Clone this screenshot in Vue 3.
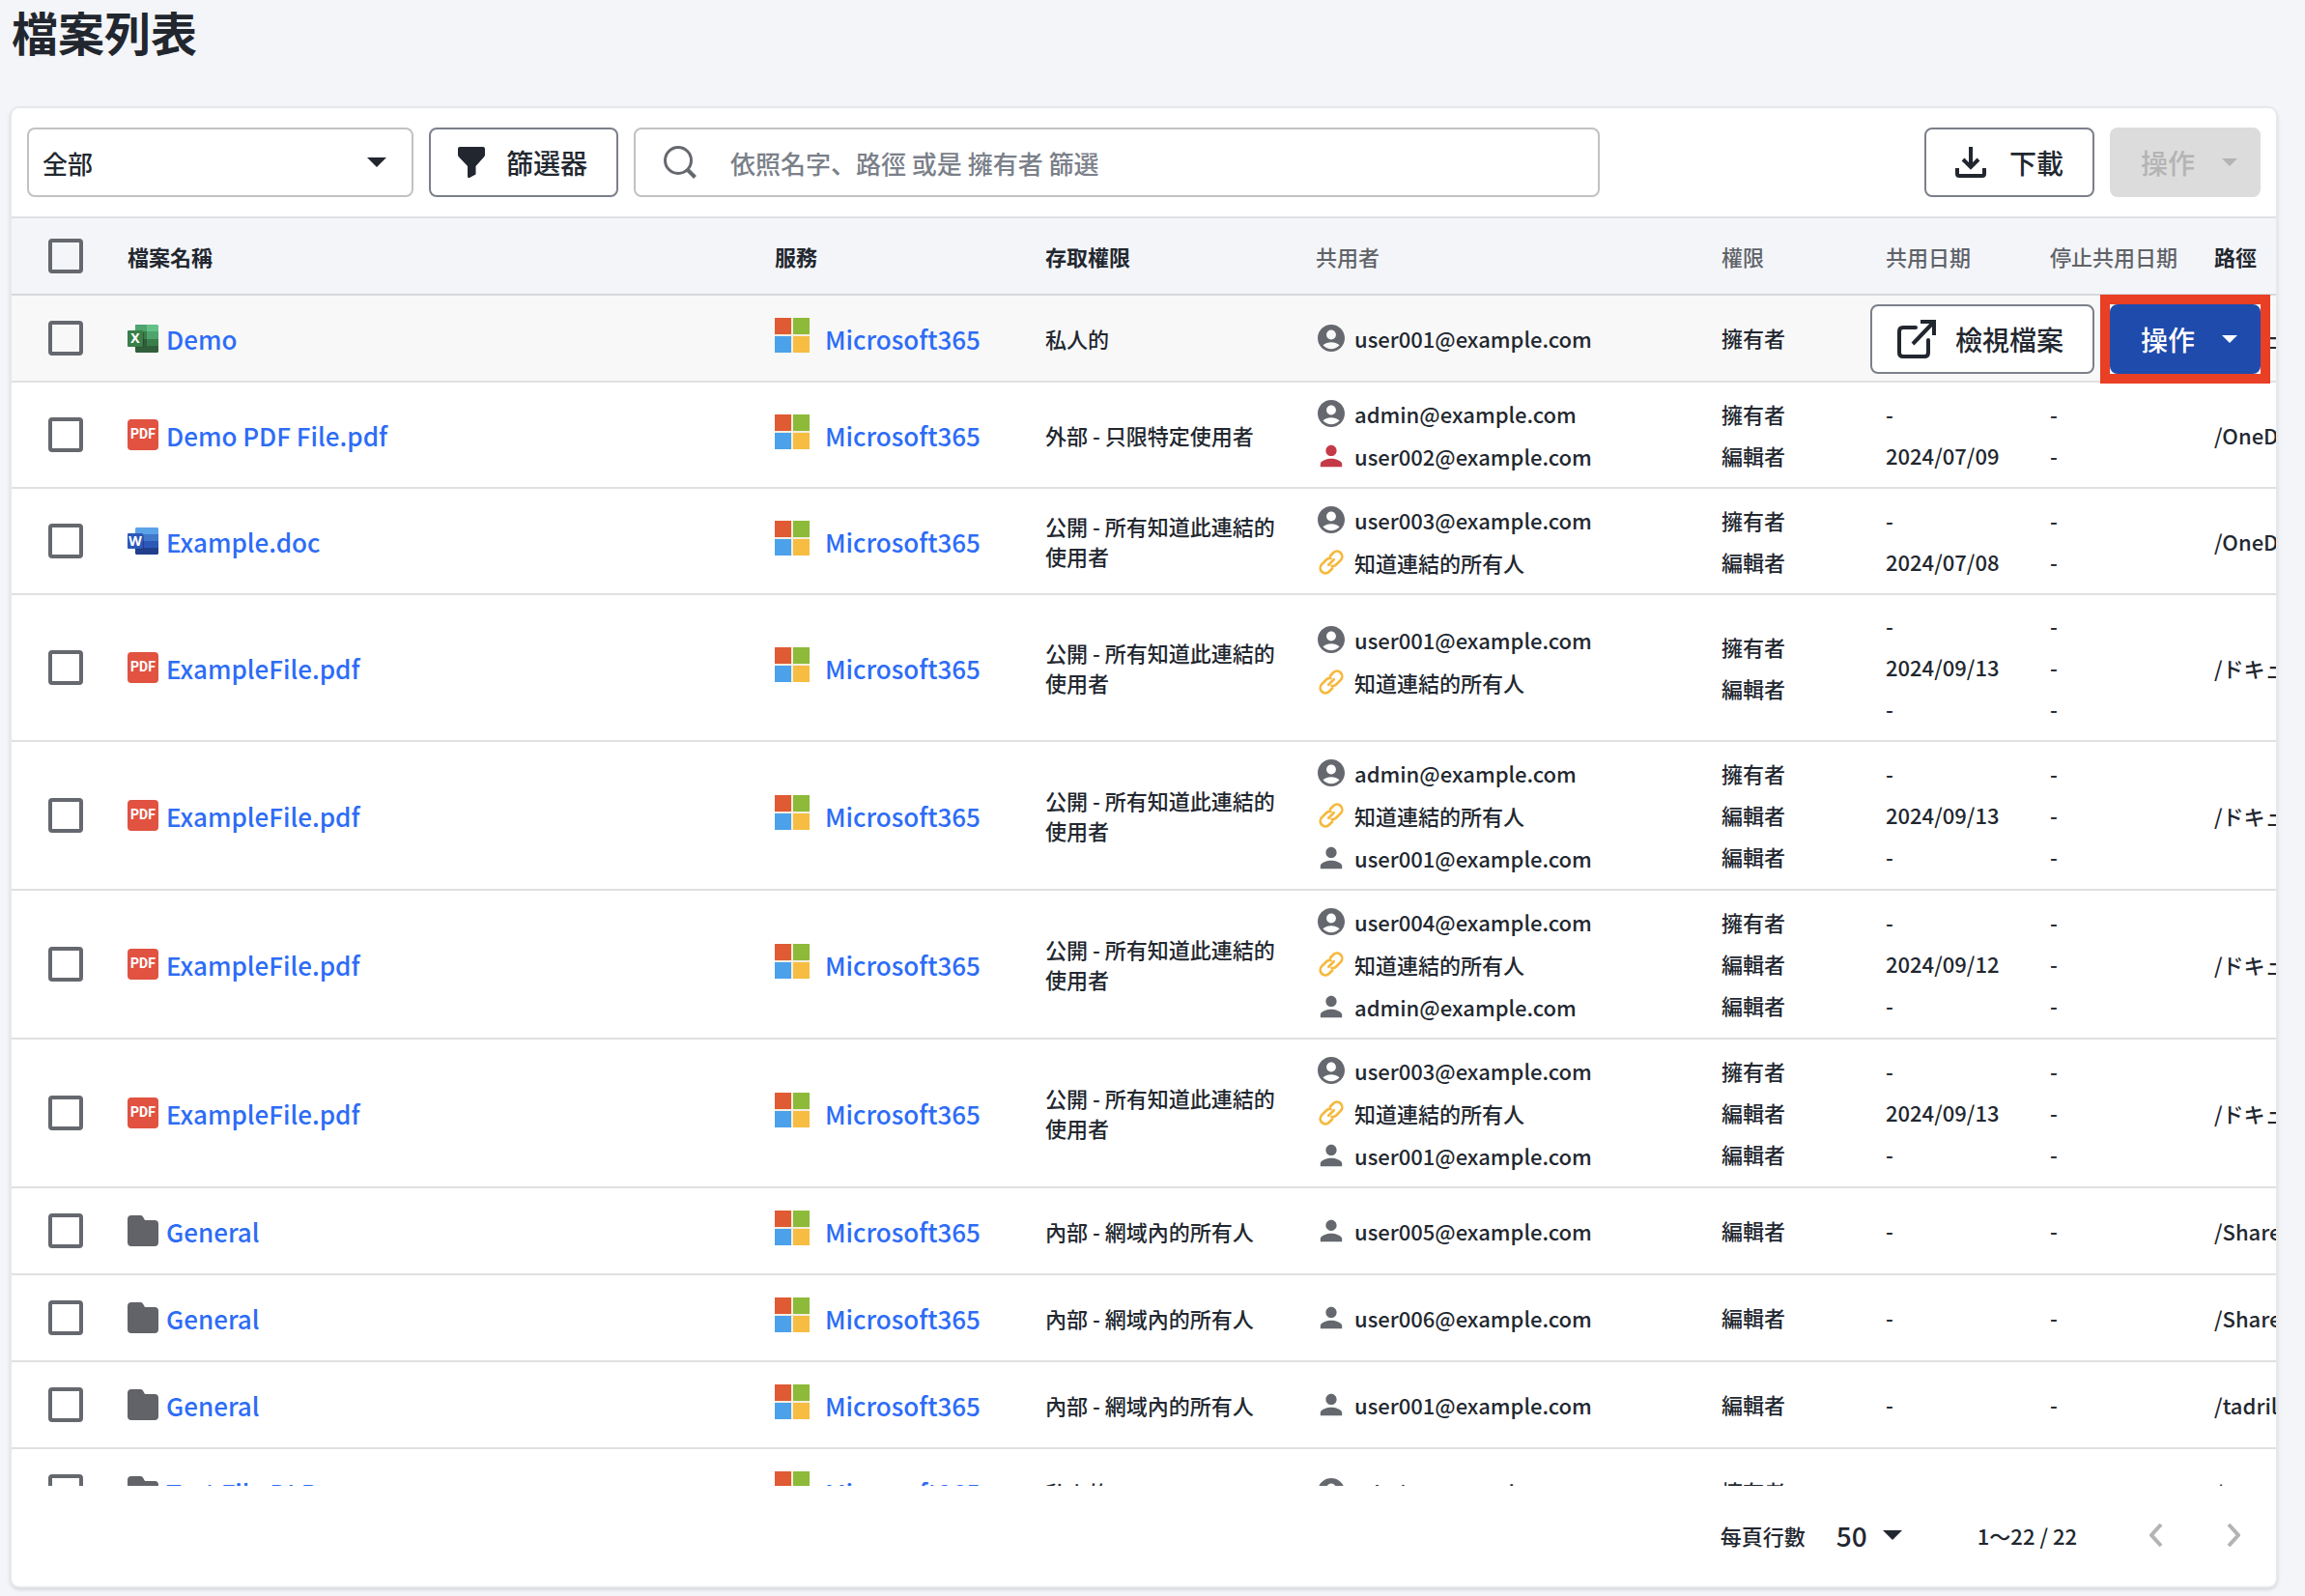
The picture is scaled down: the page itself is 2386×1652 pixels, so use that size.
<script setup>
import { ref } from 'vue'

const PUBLIC = '公開 - 所有知道此連結的使用者'
const INTERNAL = '內部 - 網域內的所有人'
const DOCS = '/ドキュメント'
const anyone = { kind: 'link', name: '知道連結的所有人' }
const owner = (name) => ({ kind: 'owner', name: name + '@example.com' })
const member = (name) => ({ kind: 'member', name: name + '@example.com' })
const external = (name) => ({ kind: 'external', name: name + '@example.com' })

const rows = ref([
  { icon: 'excel', name: 'Demo', access: '私人的', users: [owner('user001')], roles: ['擁有者'], shared: ['-'], stopped: ['-'], path: DOCS, active: true },
  { icon: 'pdf', name: 'Demo PDF File.pdf', access: '外部 - 只限特定使用者', users: [owner('admin'), external('user002')], roles: ['擁有者', '編輯者'], shared: ['-', '2024/07/09'], stopped: ['-', '-'], path: '/OneDrive' },
  { icon: 'word', name: 'Example.doc', access: PUBLIC, users: [owner('user003'), anyone], roles: ['擁有者', '編輯者'], shared: ['-', '2024/07/08'], stopped: ['-', '-'], path: '/OneDrive' },
  { icon: 'pdf', name: 'ExampleFile.pdf', access: PUBLIC, users: [owner('user001'), anyone], roles: ['擁有者', '編輯者'], shared: ['-', '2024/09/13', '-'], stopped: ['-', '-', '-'], path: DOCS },
  { icon: 'pdf', name: 'ExampleFile.pdf', access: PUBLIC, users: [owner('admin'), anyone, member('user001')], roles: ['擁有者', '編輯者', '編輯者'], shared: ['-', '2024/09/13', '-'], stopped: ['-', '-', '-'], path: DOCS },
  { icon: 'pdf', name: 'ExampleFile.pdf', access: PUBLIC, users: [owner('user004'), anyone, member('admin')], roles: ['擁有者', '編輯者', '編輯者'], shared: ['-', '2024/09/12', '-'], stopped: ['-', '-', '-'], path: DOCS },
  { icon: 'pdf', name: 'ExampleFile.pdf', access: PUBLIC, users: [owner('user003'), anyone, member('user001')], roles: ['擁有者', '編輯者', '編輯者'], shared: ['-', '2024/09/13', '-'], stopped: ['-', '-', '-'], path: DOCS },
  { icon: 'folder', name: 'General', access: INTERNAL, users: [member('user005')], roles: ['編輯者'], shared: ['-'], stopped: ['-'], path: '/Shared' },
  { icon: 'folder', name: 'General', access: INTERNAL, users: [member('user006')], roles: ['編輯者'], shared: ['-'], stopped: ['-'], path: '/Shared' },
  { icon: 'folder', name: 'General', access: INTERNAL, users: [member('user001')], roles: ['編輯者'], shared: ['-'], stopped: ['-'], path: '/tadrill' },
  { icon: 'folder', name: 'Test File DLP', access: '私人的', users: [owner('admin')], roles: ['擁有者'], shared: ['-'], stopped: ['-'], path: '/OneDrive' },
])
</script>

<template>
  <main class="page">
    <h1 class="title">檔案列表</h1>
    <section class="card">
      <div class="toolbar">
        <div class="picker scope">
          <select aria-label="範圍"><option>全部</option></select>
          <svg class="caret" viewBox="0 0 20 10"><path d="M0 0h20L10 10z" /></svg>
        </div>
        <button class="btn filter" type="button">
          <svg class="funnel" viewBox="0 0 28 32"><path d="M2 0h24q2 0 2 2v6q0 1.500-1 2.500L18.500 20v8.500L12 32q-2 .5-2-1.500V20L1 10.500Q0 9.500 0 8V2q0-2 2-2z" /></svg>
          篩選器
        </button>
        <div class="search">
          <svg viewBox="0 0 36 36" fill="none" stroke="currentColor" stroke-width="3"><circle cx="16" cy="16" r="13.500" /><path d="m26 26 7.500 7.500" stroke-width="4" /></svg>
          <input type="text" aria-label="搜尋" placeholder="依照名字、路徑 或是 擁有者 篩選" />
        </div>
        <div class="spacer"></div>
        <button class="btn" type="button">
          <svg class="download" viewBox="0 0 32 32" fill="none" stroke="currentColor" stroke-width="4"><path d="M16 0v21M8 13l8 8 8-8M2 22v6q0 2 2 2h24q2 0 2-2v-6" /></svg>
          下載
        </button>
        <button class="btn menu" type="button" disabled>
          操作
          <svg class="menu-caret" viewBox="0 0 16 8"><path d="M0 0h16L8 8z" /></svg>
        </button>
      </div>

      <div class="list">
        <table>
          <colgroup>
            <col class="w-check" /><col /><col class="w-service" /><col class="w-service" /><col class="w-users" />
            <col class="w-date" /><col class="w-date" /><col class="w-date" /><col class="w-path" />
          </colgroup>
          <thead>
            <tr>
              <th class="check"><input type="checkbox" aria-label="全選" /></th>
              <th>檔案名稱</th>
              <th>服務</th>
              <th>存取權限</th>
              <th class="plain">共用者</th>
              <th class="plain">權限</th>
              <th class="plain">共用日期</th>
              <th class="plain">停止共用日期</th>
              <th>路徑</th>
            </tr>
          </thead>
          <tbody>
            <tr v-for="(row, i) in rows" :key="i" :class="{ active: row.active }">
              <td class="check"><input type="checkbox" :aria-label="row.name" /></td>
              <td>
                <a class="file" href="#">
                  <svg v-if="row.icon === 'pdf'" class="file-icon" viewBox="0 0 32 32">
                    <rect width="32" height="32" rx="4" fill="#e15241" />
                    <text x="16" y="20" text-anchor="middle" class="pdf-text">PDF</text>
                  </svg>
                  <svg v-else-if="row.icon === 'excel'" class="file-icon" viewBox="0 0 32 32">
                    <path d="M8 2h12v7H8z" fill="#4fa36d" /><path d="M20 2h11l1 1v6H20z" fill="#63c188" />
                    <path d="M8 9h12v8H8z" fill="#3a7e49" /><path d="M20 9h12v8H20z" fill="#4fa36d" />
                    <path d="M8 17h12v7H8z" fill="#2f5f3a" /><path d="M20 17h12v7H20z" fill="#3a7e49" />
                    <path d="M8 24h24v6l-1 1H9l-1-1z" fill="#2f5f3a" />
                    <path d="M8 10h9v14l-1 1.500H8z" fill="#000" opacity=".25" />
                    <rect y="8" width="16" height="17" rx="1" fill="#3a7e49" />
                    <text x="8" y="21" text-anchor="middle" class="letter">X</text>
                  </svg>
                  <svg v-else-if="row.icon === 'word'" class="file-icon" viewBox="0 0 32 32">
                    <path d="M9 2h22l1 1v6H8V3z" fill="#5ba3e8" />
                    <path d="M8 9h24v7H8z" fill="#4078cc" />
                    <path d="M8 16h24v7H8z" fill="#2c58b8" />
                    <path d="M8 23h24v6l-1 1H9l-1-1z" fill="#213f8c" />
                    <path d="M8 10h9v13l-1 1.500H8z" fill="#000" opacity=".25" />
                    <rect y="8" width="16" height="16" rx="1" fill="#2c58b8" />
                    <text x="8" y="21" text-anchor="middle" class="letter">W</text>
                  </svg>
                  <svg v-else class="file-icon" viewBox="0 0 32 32" fill="#626368"><path d="M4 0h10q1 0 2 1.500L18 5h10q4 0 4 4v19q0 4-4 4H4q-4 0-4-4V4q0-4 4-4z" /></svg>
                  <span>{{ row.name }}</span>
                </a>
              </td>
              <td>
                <a class="service" href="#">
                  <svg class="ms" viewBox="0 0 36 36">
                    <path fill="#f4eee0" d="M0 0h36v36H0z" />
                    <path fill="#e05a33" d="M0 0h17v17H0z" /><path fill="#8dba38" d="M19 0h17v17H19z" />
                    <path fill="#4ba2ea" d="M0 19h17v17H0z" /><path fill="#f6bd42" d="M19 19h17v17H19z" />
                  </svg>
                  <span>Microsoft365</span>
                </a>
              </td>
              <td class="access">{{ row.access }}</td>
              <td>
                <div v-for="(user, j) in row.users" :key="j" class="user" :class="user.kind">
                  <svg v-if="user.kind === 'owner'" viewBox="2 2 20 20"><path d="M12 2C6.480 2 2 6.480 2 12s4.480 10 10 10 10-4.480 10-10S17.520 2 12 2zm0 4c1.930 0 3.500 1.570 3.500 3.500S13.930 13 12 13s-3.500-1.570-3.500-3.500S10.070 6 12 6zm0 14c-2.030 0-4.430-.820-6.140-2.880C7.550 15.800 9.680 15 12 15s4.450.800 6.140 2.120C16.430 19.180 14.030 20 12 20z" /></svg>
                  <svg v-else-if="user.kind === 'link'" viewBox="0 0 24 24" fill="none" stroke="currentColor" stroke-width="2.500" stroke-linecap="round"><path d="m11 6 3-3a4.600 4.600 0 0 1 7 7l-4.500 4.500a4.600 4.600 0 0 1-4 1.200M13 18l-3 3a4.600 4.600 0 0 1-7-7l4.500-4.500a4.600 4.600 0 0 1 4-1.200M9.500 14.500l5-5" /></svg>
                  <svg v-else viewBox="2 2 20 20"><path d="M12 12c2.210 0 4-1.790 4-4s-1.790-4-4-4-4 1.790-4 4 1.790 4 4 4zm0 2c-2.670 0-8 1.340-8 4v2h16v-2c0-2.660-5.330-4-8-4z" /></svg>
                  <span>{{ user.name }}</span>
                </div>
                <div v-if="row.shared.length > row.users.length" class="user-gap"></div>
              </td>
              <td class="stack"><div v-for="(role, j) in row.roles" :key="j">{{ role }}</div></td>
              <td class="stack"><div v-for="(date, j) in row.shared" :key="j">{{ date }}</div></td>
              <td class="stack"><div v-for="(date, j) in row.stopped" :key="j">{{ date }}</div></td>
              <td class="path">
                {{ row.path }}
                <div v-if="row.active" class="row-actions">
                  <button class="btn view" type="button">
                    <svg class="open" viewBox="0 0 40 40" fill="none" stroke="currentColor" stroke-width="4"><path d="M19 8H6Q2 8 2 12v22q0 4 4 4h22q4 0 4-4V21" stroke-linecap="round" /><path d="M24 2h14v14M38 2 16 25" /></svg>
                    檢視檔案
                  </button>
                  <span class="highlight">
                    <button class="btn menu primary" type="button">
                      操作
                      <svg class="menu-caret" viewBox="0 0 16 8"><path d="M0 0h16L8 8z" /></svg>
                    </button>
                  </span>
                </div>
              </td>
            </tr>
          </tbody>
        </table>
      </div>

      <footer class="pager">
        <label for="page-size">每頁行數</label>
        <div class="picker size">
          <select id="page-size"><option>50</option></select>
          <svg class="caret" viewBox="0 0 20 10"><path d="M0 0h20L10 10z" /></svg>
        </div>
        <span class="range">1～22 / 22</span>
        <button class="nav" type="button" aria-label="上一頁" disabled>
          <svg viewBox="0 0 14 24"><path d="M12 1 2 12l10 11" /></svg>
        </button>
        <button class="nav" type="button" aria-label="下一頁" disabled>
          <svg viewBox="0 0 14 24"><path d="m2 1 10 11L2 23" /></svg>
        </button>
      </footer>
    </section>
  </main>
</template>

<style>
body {
  margin: 0;
  background: #f4f5f8;
}
</style>

<style scoped>
.page {
  box-sizing: border-box;
  height: 100vh;
  padding: 0 30px 10px 12px;
  display: flex;
  flex-direction: column;
  color: #22272f;
  font-family: "Noto Sans CJK JP", "Noto Sans CJK TC", sans-serif;
  font-size: 22px;
  font-weight: 500;
}
.title {
  margin: 0 0 48px;
  font-size: 48px;
  line-height: 64px;
  font-weight: 700;
}
.card {
  flex: 1;
  min-height: 0;
  display: flex;
  flex-direction: column;
  background: #fff;
  border-radius: 8px;
  box-shadow: 0 0 0 2px #e6e8ea, 0 2px 4px 1px #c8cbd0;
}
.toolbar {
  display: flex;
  gap: 16px;
  padding: 20px 16px;
  border-bottom: 2px solid #dfe1e4;
}
select,
input,
button {
  font: inherit;
  color: inherit;
}
.picker {
  position: relative;
  display: flex;
  align-items: center;
}
.picker select {
  appearance: none;
  width: 100%;
  margin: 0;
  background: transparent;
  border: 0;
  outline: 0;
}
.caret {
  position: absolute;
  width: 20px;
  height: 10px;
  fill: currentColor;
  pointer-events: none;
}
.scope {
  width: 400px;
}
.picker.scope select {
  height: 72px;
  padding: 0 14px;
  border: 2px solid #c2c2c2;
  border-radius: 8px;
  font-size: 26px;
}
.scope .caret {
  right: 28px;
}
.btn {
  box-sizing: border-box;
  height: 72px;
  padding: 0 30px;
  display: flex;
  align-items: center;
  gap: 24px;
  background: #fff;
  border: 2px solid #7b808a;
  border-radius: 8px;
  font-size: 28px;
  white-space: nowrap;
}
.btn svg {
  fill: currentColor;
}
.filter {
  gap: 22px;
  padding-left: 28px;
}
.view {
  gap: 20px;
  padding-left: 26px;
}
.btn .funnel {
  width: 28px;
  height: 32px;
}
.btn .download {
  width: 32px;
  height: 32px;
  fill: none;
}
.btn .open {
  width: 40px;
  height: 40px;
  fill: none;
}
.menu {
  gap: 28px;
  padding: 0 22px 0 30px;
}
.menu-caret {
  width: 16px;
  height: 8px;
}
.btn:disabled {
  color: #b4b4b4;
  background: #dcdcdc;
  border-color: #dcdcdc;
}
.primary {
  color: #fff;
  background: #1f4bad;
  border-color: #1f4bad;
}
.search {
  box-sizing: border-box;
  flex: 0 1 1000px;
  height: 72px;
  padding: 0 28px;
  display: flex;
  align-items: center;
  gap: 34px;
  border: 2px solid #c2c2c2;
  border-radius: 8px;
}
.search svg {
  width: 36px;
  height: 36px;
  color: #65686e;
}
.search input {
  flex: 1;
  min-width: 0;
  padding: 0;
  border: 0;
  outline: 0;
  background: transparent;
  font-size: 26px;
}
.search input::placeholder {
  color: #7b808a;
  opacity: 1;
}
.spacer {
  flex: 1;
}
.list {
  flex: 1;
  min-height: 0;
  overflow: hidden;
}
table {
  width: 100%;
  table-layout: fixed;
  border-spacing: 0;
}
.w-check { width: 120px; }
.w-service { width: 280px; }
.w-users { width: 420px; }
.w-date { width: 170px; }
.w-path { width: 64px; }
th {
  height: 80px;
  box-sizing: border-box;
  padding: 0;
  text-align: left;
  white-space: nowrap;
  font-weight: 700;
  background: #f4f5f8;
  border-bottom: 2px solid #d5d8dc;
}
.plain {
  font-weight: 500;
  color: #5f6369;
}
td {
  height: 90px;
  box-sizing: border-box;
  padding: 10px 0;
  vertical-align: middle;
  border-bottom: 2px solid #e0e0e0;
}
.active td {
  background: #f8f8f8;
}
.check {
  padding-left: 38px;
}
input[type="checkbox"] {
  appearance: none;
  display: block;
  box-sizing: border-box;
  width: 36px;
  height: 36px;
  margin: 0;
  border: 4px solid #65686e;
  border-radius: 4px;
}
a {
  display: inline-flex;
  align-items: center;
  color: #2d6cf6;
  font-size: 26px;
  line-height: 40px;
  text-decoration: none;
  vertical-align: middle;
}
a span {
  padding-top: 2px;
}
.file {
  gap: 8px;
}
.service {
  gap: 16px;
}
.file-icon {
  width: 32px;
  height: 32px;
}
.ms {
  width: 36px;
  height: 36px;
  margin-bottom: 6px;
}
.pdf-text,
.letter {
  fill: #fff;
  font-family: Roboto, sans-serif;
  font-weight: 700;
  font-size: 14px;
}
.letter {
  font-family: "Open Sans", sans-serif;
}
.access {
  padding-right: 30px;
  line-height: 31px;
}
.user {
  display: flex;
  align-items: center;
  gap: 10px;
  padding-left: 2px;
  line-height: 44px;
}
.user-gap {
  height: 14px;
}
.user svg {
  width: 28px;
  height: 28px;
  fill: #65686e;
}
.user.external svg {
  fill: #c43a49;
}
.user.link svg {
  box-sizing: border-box;
  padding: 1px;
  fill: none;
  color: #f5b93e;
}
.stack {
  padding: 10px 0 11px;
  line-height: 43px;
}
.path {
  position: relative;
  white-space: nowrap;
}
.row-actions {
  position: absolute;
  top: 9px;
  right: 16px;
  display: flex;
  gap: 16px;
}
.highlight {
  position: relative;
}
.highlight::after {
  content: "";
  position: absolute;
  inset: -10px;
  border: 10px solid #e93f25;
  pointer-events: none;
}
.pager {
  box-sizing: border-box;
  height: 104px;
  display: flex;
  align-items: center;
  justify-content: flex-end;
  padding: 0 34px 2px 0;
}
.size {
  width: 74px;
  margin-left: 32px;
}
.size select {
  padding: 0;
  font-size: 28px;
}
.size .caret {
  right: 6px;
}
.range {
  margin: 0 72px 0 72px;
}
.nav {
  width: 20px;
  padding: 0;
  display: flex;
  justify-content: center;
  background: none;
  border: 0;
}
.nav + .nav {
  margin-left: 60px;
}
.nav svg {
  width: 14px;
  height: 24px;
  fill: none;
  stroke: #b4b4b4;
  stroke-width: 4;
}
</style>
